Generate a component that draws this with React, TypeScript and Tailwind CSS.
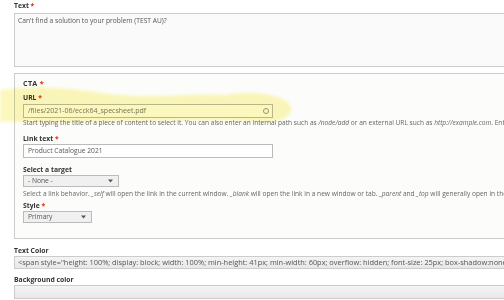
import React from "react"

function Label({ text, required, className = "" }: { text: string; required?: boolean; className?: string }) {
  return (
    <div className={`h-[8px] whitespace-nowrap text-[6.8px] font-bold leading-[8px] text-[#333] ${className}`}>
      {text}
      {required && <span className="text-[#e32700]"> *</span>}
    </div>
  )
}

function Arrow() {
  return (
    <svg width="5" height="4" viewBox="0 0 5 4" className="absolute right-[5px] top-1/2 -translate-y-1/2">
      <path d="M0 0.5 L5 0.5 L2.5 3.5 Z" fill="#555" />
    </svg>
  )
}

export default function App() {
  return (
    <div className="relative h-[300px] w-[504px] overflow-hidden bg-white font-['Open_Sans',sans-serif] text-[#333]">
      <div className="w-[580px] pl-[14px]">
        <Label text="Text" required className="mt-[2px]" />
        <div className="mt-[3px] h-[54px] border border-[#ccc] bg-[#fafafa] px-[3px] pt-[3px] text-[6.7px] leading-[8px] text-[#555]">
          Can't find a solution to your problem (TEST AU)?
        </div>

        <div className="mt-[6px] h-[166px] border border-[#ccc] bg-[#fcfcfa] pl-[8px]">
          <div className="mt-[5px] h-[8px] text-[7.2px] font-bold leading-[8px] tracking-[0.3px] text-[#333]">
            CTA<span className="text-[#e32700]"> *</span>
          </div>

          <Label text="URL" required className="mt-[7px]" />
          <div className="relative mt-[2px] flex h-[14px] w-[250px] items-center border border-[#bbb] bg-white px-[4px] text-[7px] text-[#777]">
            /files/2021-06/ecck64_specsheet.pdf
            <span className="absolute right-[3px] top-1/2 h-[6px] w-[6px] -translate-y-1/2 rounded-full border border-[#999]" />
          </div>
          <div className="mt-[1px] h-[8px] whitespace-nowrap text-[6.6px] leading-[8px] text-[#666]">
            Start typing the title of a piece of content to select it. You can also enter an internal path such as{" "}
            <em>/node/add</em> or an external URL such as <em>http://example.com</em>. Enter &lt;nolink&gt; to display link text only.
          </div>

          <Label text="Link text" required className="mt-[8px]" />
          <div className="mt-[1px] flex h-[14px] w-[250px] items-center border border-[#bbb] bg-white px-[4px] text-[6.7px] text-[#555]">
            Product Catalogue 2021
          </div>

          <Label text="Select a target" className="mt-[8px]" />
          <div className="relative mt-[1px] flex h-[12px] w-[96px] items-center border border-[#bbb] bg-[#f0f0f0] px-[4px] text-[6.7px] text-[#555]">
            - None -
            <Arrow />
          </div>
          <div className="mt-[3px] h-[8px] whitespace-nowrap text-[6.6px] leading-[8px] text-[#666]">
            Select a link behavior. <em>_self</em> will open the link in the current window. <em>_blank</em> will open the
            link in a new window or tab. <em>_parent</em> and <em>_top</em> will generally open in the same window.
          </div>

          <Label text="Style" required className="mt-[4px]" />
          <div className="relative mt-[1px] flex h-[12px] w-[69px] items-center border border-[#bbb] bg-[#f0f0f0] px-[4px] text-[6.7px] text-[#555]">
            Primary
            <Arrow />
          </div>
        </div>

        <Label text="Text Color" className="mt-[8px]" />
        <div className="mt-[1px] flex h-[13px] items-center whitespace-nowrap border border-[#ccc] bg-gradient-to-b from-[#f4f4f4] to-[#e8e8e8] px-[3px] text-[7.4px] text-[#555]">
          &lt;span style="height: 100%; display: block; width: 100%; min-height: 41px; min-width: 60px; overflow: hidden;
          font-size: 25px; box-shadow:none;"&gt;
        </div>

        <Label text="Background color" className="mt-[7px]" />
        <div className="mt-[1px] h-[14px] border border-[#ccc] bg-gradient-to-b from-[#f4f4f4] to-[#e8e8e8]" />
      </div>

      <svg className="pointer-events-none absolute left-0 top-0 mix-blend-multiply" width="504" height="300">
        <defs>
          <filter id="soft">
            <feGaussianBlur stdDeviation="1.5" />
          </filter>
        </defs>
        <path
          d="M0 90 C30 85 70 88 110 94 C150 99 190 93 225 95 C255 89 290 96 291 108 C292 122 268 124 245 121 C180 119 100 123 0 122 Z"
          fill="#fbf59a"
          opacity="0.65"
          filter="url(#soft)"
        />
      </svg>
    </div>
  )
}
